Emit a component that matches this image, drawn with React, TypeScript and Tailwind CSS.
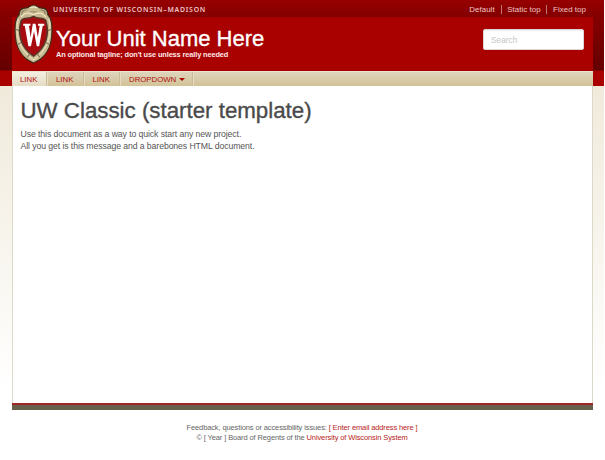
function Crest() {
  return (
    <svg className="absolute left-[2px] top-[4px] h-[60px] w-[39px]" viewBox="0 0 38 61" preserveAspectRatio="none" fill="none">
      <path d="M19 1C16 1 15 4 12 4C7 4 5 7 5 11C1 15 1 21 1 28C1 43 7 55 19 60C31 55 37 43 37 28C37 21 37 15 33 11C33 7 31 4 26 4C23 4 22 1 19 1Z" fill="#c6b990" stroke="#3f2b1d" strokeWidth="1.2" />
      <path d="M4 15C1.5 28 3 45 19 57C35 45 36.5 28 34 15" stroke="#e2d8b4" strokeWidth="1.5" />
      <path d="M12 6C8 6 7 9 8 11M26 6C30 6 31 9 30 11M16 8H22" stroke="#85755a" strokeWidth="1" />
      <path d="M15 4C17 3 21 3 23 4M7 13C10 9 15 8 19 11C23 8 28 9 31 13" stroke="#eee4c2" strokeWidth="1.3" />
      <path d="M2 26L5 27M36 26L33 27M4 41L7 39M34 41L31 39M13 54L15 51M25 54L23 51" stroke="#7b6c50" strokeWidth="1" />
      <path d="M19 12.5C14 16 9 13 7 17C3.5 30 6 44 19 53C32 44 34.5 30 31 17C29 13 24 16 19 12.5Z" fill="#a80b0e" stroke="#59352a" strokeWidth="1.6" />
      <path d="M9 20H16V22H14.6L16.2 34L18.3 20H21L23.2 34L25 22H23.4V20H29.5V22H28L24.5 43H22.2L19.5 28L16.5 43H14L10.5 22H9Z" fill="#fff" />
    </svg>
  );
}

function TopBar() {
  return (
    <div className="flex h-[17px] items-center justify-between pl-[41px] pr-[18px]">
      <span className="h-[17px] whitespace-nowrap font-['Noto_Sans','Open_Sans',sans-serif] text-[6.9px] font-semibold leading-[19px] tracking-[0.76px] text-[#edc6c6]">
        UNIVERSITY OF WISCONSIN–MADISON
      </span>
      <nav className="flex h-[17px] items-center whitespace-nowrap pt-[1px] text-[7.9px] tracking-[0.05px] text-[#edc6c6]">
        <a className="pr-[6px] leading-[9px]">Default</a>
        <a className="border-l border-[#c27878] px-[5.5px] leading-[9px]">Static top</a>
        <a className="border-l border-[#c27878] pl-[6px] leading-[9px]">Fixed top</a>
      </nav>
    </div>
  );
}

function Navigation() {
  const item = "flex h-full items-center border-r border-[#cbbc98] pt-[1px] shadow-[1px_0_0_#e6dcc4]";
  return (
    <nav className="flex h-[15px] border-t border-[#efe5d1] bg-linear-to-b from-[#dfd5bd] to-[#d2c297] text-[7.8px] text-[#b00b0b]">
      <a className={`${item} w-[35px] bg-linear-to-b from-[#f3eee1] to-[#e5dcc4] pl-[8px]`}>LINK</a>
      <a className={`${item} w-[37px] pl-[9px]`}>LINK</a>
      <a className={`${item} w-[36px] pl-[8.5px]`}>LINK</a>
      <a className={`${item} w-[73px] gap-[3px] pl-[9px]`}>
        DROPDOWN
        <span className="border-x-[3px] border-t-[3px] border-x-transparent border-t-[#a90000]" />
      </a>
    </nav>
  );
}

export default function App() {
  return (
    <div className="h-[460px] w-[605px] overflow-hidden bg-white font-['Liberation_Sans',Arial,sans-serif]">
      <div className="h-full w-[604px] bg-[linear-gradient(to_bottom,#900000_0,#650000_70px,#a90000_71px,#a90000_86px,#f0eadb_86px,#ffffff_390px)]">
        <div className="ml-[12px] w-[581px]">
          <div className="-ml-[12px] w-[604px] bg-linear-to-b from-[#970000] to-[#830000] pl-[12px]">
            <TopBar />
          </div>
          <header className="relative flex h-[54px] justify-between bg-[#a90000] pl-[44px] pr-[9px]">
            <div className="whitespace-nowrap pt-[9px] text-white">
              <h1 className="text-[22px] font-normal leading-[26px] [-webkit-text-stroke:0.35px_#fff]">Your Unit Name Here</h1>
              <p className="-mt-[2px] text-[7.4px] font-bold leading-[9px] tracking-[-0.12px] text-[#ffe9e9]">An optional tagline; don't use unless really needed</p>
            </div>
            <div className="absolute left-0 top-0 -mt-[17px]">
              <Crest />
            </div>
            <input className="mt-[12px] h-[21px] w-[101px] rounded-[2px] border border-[#ddd5d5] bg-white px-[7px] text-[8.3px] shadow-[inset_0_1px_1px_#0001] placeholder:text-[#c5c5c5]" placeholder="Search" />
          </header>
          <Navigation />
          <main className="h-[317px] whitespace-nowrap border-x border-[#ddd9c9] bg-white pl-[7.5px] pt-[11px] text-[#4a4a4a]">
            <h2 className="text-[22.3px] font-normal leading-[28px] [-webkit-text-stroke:0.35px_#4a4a4a]">UW Classic (starter template)</h2>
            <p className="pt-[3px] text-[8.7px] leading-[12px] tracking-[-0.09px] text-[#555]">
              Use this document as a way to quick start any new project.
              <br />
              All you get is this message and a barebones HTML document.
            </p>
          </main>
          <div className="h-[7px] border-t-2 border-[#a12525] bg-[#665f4c]" />
        </div>
        <footer className="whitespace-nowrap pt-[13px] text-center text-[7.5px] leading-[10px] tracking-[-0.12px] text-[#666]">
          <p>Feedback, questions or accessibility issues: <a className="text-[#b71c1c]">[ Enter email address here ]</a></p>
          <p>© [ Year ] Board of Regents of the <a className="text-[#b71c1c]">University of Wisconsin System</a></p>
        </footer>
      </div>
    </div>
  );
}
